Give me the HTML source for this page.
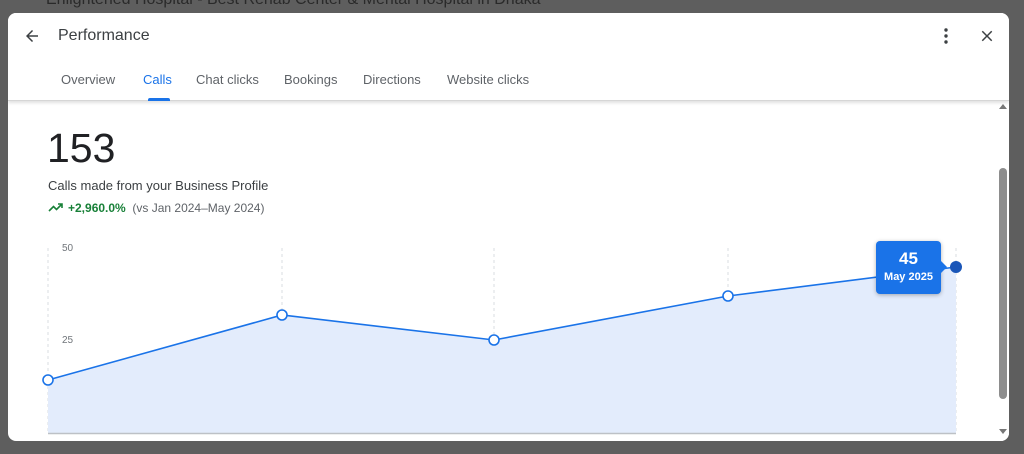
<!DOCTYPE html>
<html><head><meta charset="utf-8"><style>
*{margin:0;padding:0;box-sizing:border-box}
body{width:1024px;height:454px;overflow:hidden;background:#5e5e5e;font-family:"Liberation Sans",Arial,sans-serif;position:relative}
.bgt{position:absolute;top:-9px;left:46px;color:#2a2a2a;font-size:16px;white-space:nowrap}
.modal{position:absolute;left:8px;top:13px;width:1001px;height:428px;background:#fff;border-radius:8px;overflow:hidden}
.hdr{position:absolute;left:0;top:0;width:100%;height:88px;border-bottom:1px solid #d6d6d6;box-shadow:0 2px 3px rgba(0,0,0,.12);background:#fff;z-index:2}
.title{position:absolute;left:50px;top:14px;font-size:16px;color:#3c4043}
.tabs{position:absolute;top:59px;left:0;font-size:13px;color:#5f6368}
.tabs span{position:absolute;white-space:nowrap}
.ul{position:absolute;left:140px;top:85px;width:22px;height:3px;background:#1a73e8;border-radius:2px 2px 0 0}
.big{position:absolute;left:39px;top:112px;font-size:41px;color:#202124}
.sub{position:absolute;left:40px;top:165px;font-size:13px;color:#3c4043}
.chg{position:absolute;left:40px;top:188px;font-size:12px;color:#5f6368}
.chg b{color:#188038;font-weight:bold}
.sb{position:absolute;left:989px;top:88px;width:12px;height:340px;background:#fff}
.thumb{position:absolute;left:991px;top:155px;width:8px;height:231px;background:#8d8d8d;border-radius:4px}
.tip{position:absolute;left:868px;top:228px;width:65px;height:53px;background:#1a73e8;border-radius:4px;color:#fff;text-align:center;box-shadow:0 1px 4px rgba(0,0,0,.3)}
.tip:after{content:"";position:absolute;right:-6px;top:20px;border-left:6px solid #1a73e8;border-top:6px solid transparent;border-bottom:6px solid transparent}
</style></head><body>
<div class="bgt">Enlightened Hospital - Best Rehab Center &amp; Mental Hospital in Dhaka</div>
<div class="modal">
 <div class="hdr">
  <svg style="position:absolute;left:15px;top:14px" width="18" height="18" viewBox="0 0 24 24"><path d="M20 11H7.8l5.6-5.6L12 4l-8 8 8 8 1.4-1.4L7.8 13H20z" fill="#3c4043"/></svg>
  <div class="title">Performance</div>
  <svg style="position:absolute;left:928px;top:14px" width="20" height="18" viewBox="0 0 20 18"><circle cx="10" cy="3" r="1.7" fill="#3c4043"/><circle cx="10" cy="9" r="1.7" fill="#3c4043"/><circle cx="10" cy="15" r="1.7" fill="#3c4043"/></svg>
  <svg style="position:absolute;left:970px;top:14px" width="18" height="18" viewBox="0 0 24 24"><path d="M19 6.4L17.6 5 12 10.6 6.4 5 5 6.4 10.6 12 5 17.6 6.4 19 12 13.4 17.6 19 19 17.6 13.4 12z" fill="#3c4043"/></svg>
  <div class="tabs">
   <span style="left:53px">Overview</span>
   <span style="left:135px;color:#1a73e8">Calls</span>
   <span style="left:188px">Chat clicks</span>
   <span style="left:276px">Bookings</span>
   <span style="left:355px">Directions</span>
   <span style="left:439px">Website clicks</span>
  </div>
  <div class="ul"></div>
 </div>
 <div class="big">153</div>
 <div class="sub">Calls made from your Business Profile</div>
 <div class="chg"><svg width="16" height="10" viewBox="0 0 16 10" style="vertical-align:-1px;margin-right:4px"><path d="M1 8l4.5-4.5 3 3L14 1M10 1h4v4" stroke="#188038" stroke-width="1.6" fill="none"/></svg><b>+2,960.0%</b>&nbsp; (vs Jan 2024–May 2024)</div>
 <svg style="position:absolute;left:0;top:0" width="1001" height="428">
  <g stroke="#dadce0" stroke-dasharray="3,3" stroke-width="1">
   <line x1="40" y1="235" x2="40" y2="420"/><line x1="274" y1="235" x2="274" y2="420"/><line x1="486" y1="235" x2="486" y2="420"/><line x1="720" y1="235" x2="720" y2="420"/><line x1="948" y1="235" x2="948" y2="420"/>
  </g>
  <text x="54" y="238" font-size="10" fill="#70757a" font-family="Liberation Sans">50</text>
  <text x="54" y="330" font-size="10" fill="#70757a" font-family="Liberation Sans">25</text>
  <polygon points="40,367 274,302 486,327 720,283 948,254 948,420 40,420" fill="#e3ecfc"/>
  <polyline points="40,367 274,302 486,327 720,283 948,254" fill="none" stroke="#1a73e8" stroke-width="1.6"/>
  <line x1="40" y1="420.5" x2="948" y2="420.5" stroke="#bdc1c6" stroke-width="1.5"/>
  <g fill="#fff" stroke="#1a73e8" stroke-width="1.6">
   <circle cx="40" cy="367" r="5"/><circle cx="274" cy="302" r="5"/><circle cx="486" cy="327" r="5"/><circle cx="720" cy="283" r="5"/>
  </g>
  <circle cx="948" cy="254" r="6" fill="#1a56b8"/>
 </svg>
 <div class="tip"><div style="font-size:17px;font-weight:bold;margin-top:8px">45</div><div style="font-size:11px;font-weight:bold;margin-top:2px">May 2025</div></div>
 <div class="sb"></div>
 <div class="thumb"></div>
 <svg style="position:absolute;left:991px;top:91px" width="8" height="6"><path d="M0 5L4 0 8 5z" fill="#777"/></svg>
 <svg style="position:absolute;left:991px;top:416px" width="8" height="6"><path d="M0 0L4 5 8 0z" fill="#777"/></svg>
</div>
</body></html>
